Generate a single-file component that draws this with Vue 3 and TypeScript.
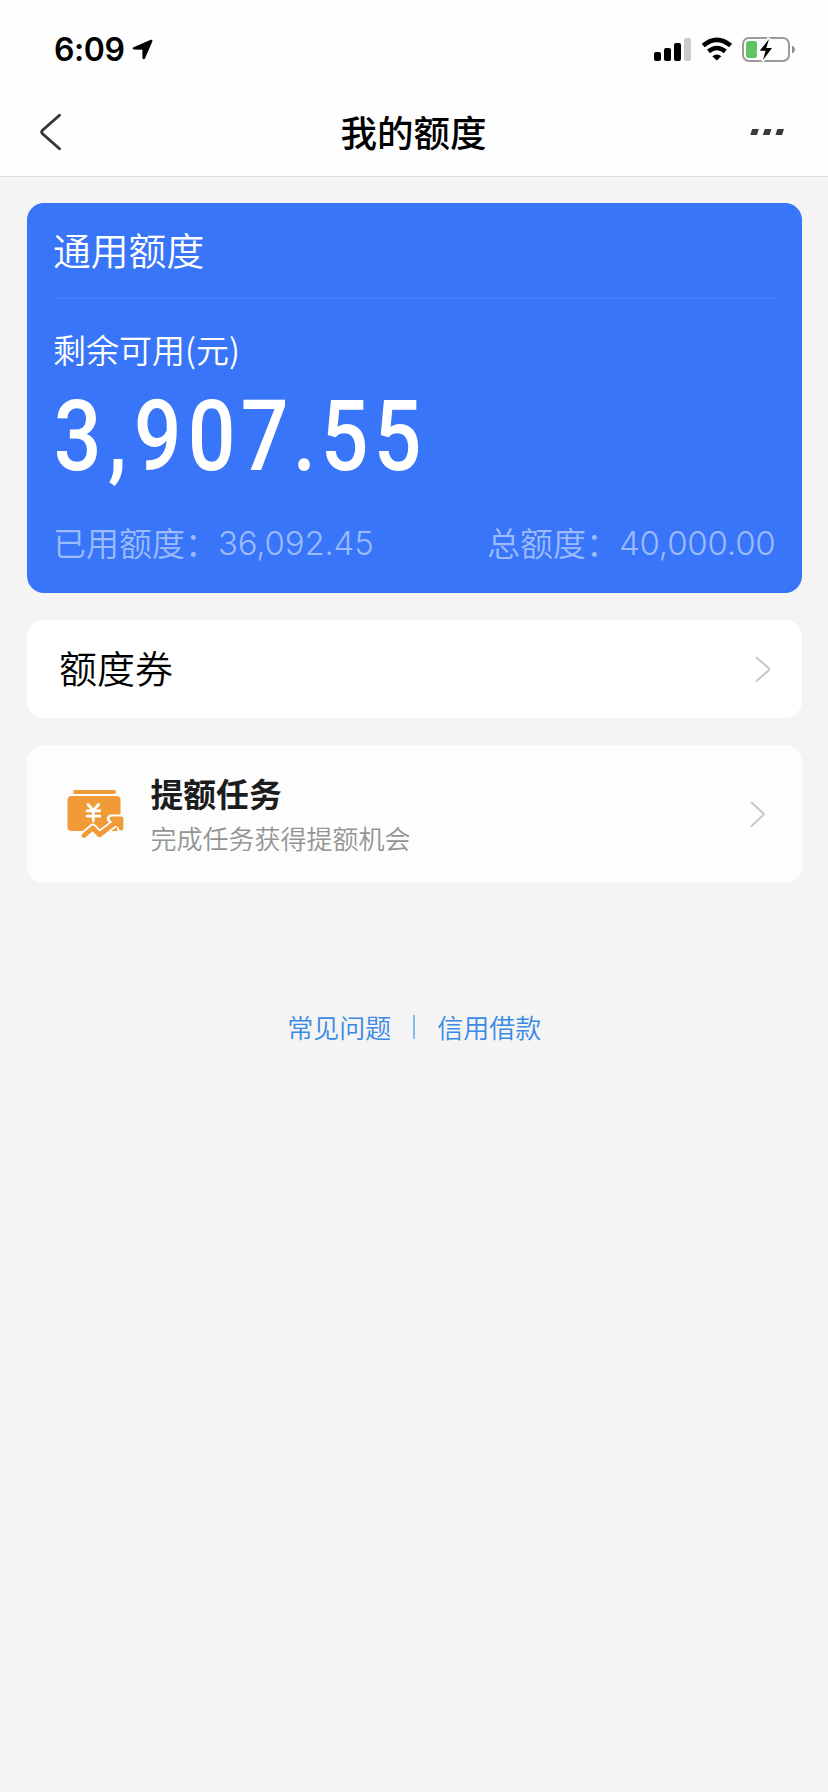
<script setup lang="ts">
import { computed, ref } from 'vue'

interface QuotaItem {
  label: string
  value: string
}

const available = ref('3,907.55')
const amountChars = computed(() =>
  available.value.split('').map((char) => ({ char, mark: char === ',' || char === '.' })),
)

const details: QuotaItem[] = [
  { label: '已用额度：', value: '36,092.45' },
  { label: '总额度：', value: '40,000.00' },
]
</script>

<template>
  <main class="screen">
    <div class="status">
      <div class="clock">
        <span class="time">6:09</span>
        <svg class="locate" width="22" height="22" viewBox="0 0 22 22">
          <path d="M1.5 8.2 18.8.8Q20.8.2 20.3 2.4L13.2 18.9Q11.7 21.4 10.4 19V10.8L1.8 10.4Q-.6 9.4 1.5 8.2Z" />
        </svg>
      </div>
      <div class="indicators">
        <svg width="37" height="24" viewBox="0 0 37 24">
          <rect x="0" y="14" width="7" height="9" rx="2" />
          <rect x="10" y="10" width="7" height="13" rx="2" />
          <rect x="20" y="5" width="7" height="18" rx="2" />
          <rect x="30" y="0" width="7" height="23" rx="2" fill="#cacaca" />
        </svg>
        <svg class="wifi" width="32" height="24" viewBox="0 0 32 24">
          <g fill="none" stroke="#000" stroke-width="4.6">
            <path d="M2.2 8.6Q15.8-3 29.6 8.6" />
            <path d="M7.5 14.4Q15.8 7.6 24.3 14.4" />
          </g>
          <path d="M15.8 23.6 11.3 19.2Q15.8 15.6 20.3 19.2Z" />
        </svg>
        <svg class="battery" width="53" height="25" viewBox="0 0 53 25">
          <rect x="1" y="1" width="46" height="23" rx="6" fill="none" stroke="#9a9a9a" stroke-width="2" />
          <rect x="4" y="4" width="11" height="17" rx="2.5" fill="#5fc466" />
          <path d="M50 8.5Q53 10 53 12.5T50 16.5Z" fill="#8c8c8c" />
          <path d="M27 1 17 14h6.2L20.3 24 30.7 10.6H24.5Z" stroke="#fff" stroke-width="3" />
          <path d="M27 2 17.8 13.7h5.8L21 23 30 10.9H24.3Z" />
        </svg>
      </div>
    </div>

    <header class="nav">
      <svg class="back" width="22" height="38" viewBox="0 0 22 38">
        <path d="M19.5 2.2 2.5 17.2Q.8 19 2.5 20.7L19.5 35.7" />
      </svg>
      <h1 class="title">我的额度</h1>
      <svg class="more" width="35" height="6" viewBox="0 0 35 6">
        <path d="M2.2 0h6.6L6.9 6H.2ZM14.8 0h6.6L19.5 6H12.8ZM27.4 0H34L32.1 6H25.4Z" />
      </svg>
    </header>

    <div class="content">
      <section class="quota">
        <h2 class="quota-title">通用额度</h2>
        <p class="quota-label">剩余可用(元)</p>
        <p class="amount">
          <span v-for="(item, i) in amountChars" :key="i" class="digit" :class="{ mark: item.mark }">{{ item.char }}</span>
        </p>
        <div class="details">
          <p v-for="item in details" :key="item.label" class="detail">
            <span class="detail-label">{{ item.label }}</span>
            <span class="detail-value">{{ item.value }}</span>
          </p>
        </div>
      </section>

      <section class="row coupon">
        <h2 class="coupon-title">额度券</h2>
        <svg class="chevron" width="16" height="26" viewBox="0 0 16 26">
          <path d="M1.5 1.5 13.5 12Q14.8 13.2 13.5 14.4L1.5 25" />
        </svg>
      </section>

      <section class="row task">
        <svg class="task-icon" width="58" height="50" viewBox="0 0 58 50">
          <rect x="6" y="1" width="43" height="4" rx="2" />
          <rect x="0.5" y="7" width="53" height="35" rx="4" />
          <path class="yen" d="M21 15.5 26.3 21.5 31.6 15.5M20 21.8H32.8M20 27.2H32.8M26.3 21.7V32" />
          <path class="trend-gap" d="M17 46.5 25.8 39 32.5 45.8 50 32.5M44 29.8H54V39" />
          <path class="trend" d="M17 46.5 25.8 39 32.5 45.8 51 31.5M45 29.8H54V39" />
          <path d="M46 28H56V41L48 36.5 44.5 32Z" />
        </svg>
        <div class="task-text">
          <h3 class="task-title">提额任务</h3>
          <p class="task-sub">完成任务获得提额机会</p>
        </div>
        <svg class="chevron" width="16" height="26" viewBox="0 0 16 26">
          <path d="M1.5 1.5 13 12Q14.2 13.2 13 14.4L1.5 25" />
        </svg>
      </section>

      <footer class="links">
        <span>常见问题</span>
        <i class="bar"></i>
        <span>信用借款</span>
      </footer>
    </div>
  </main>
</template>

<style>
body {
  background: #f4f4f4;
}
</style>

<style scoped>
.screen {
  min-height: 1792px;
  background: #f4f4f4;
  font-family: 'Noto Sans CJK SC', sans-serif;
  color: #000;
}
h1, h2, h3, p {
  margin: 0;
  font-weight: 400;
}
svg {
  display: block;
  flex: none;
}
.status {
  box-sizing: border-box;
  height: 88px;
  padding: 0 34px 0 54px;
  background: #fefefe;
  display: flex;
  justify-content: space-between;
}
.clock {
  display: flex;
  padding-top: 30px;
}
.time {
  width: 78px;
  font: 600 32px/40px Inter, sans-serif;
  letter-spacing: -0.4px;
  white-space: nowrap;
}
.locate {
  margin-top: 9px;
}
.indicators {
  display: flex;
  align-items: flex-start;
  padding-top: 37px;
  margin-right: -1px;
}
.indicators svg:first-child {
  margin-top: 1px;
}
.wifi {
  margin-left: 10px;
}
.battery {
  margin-left: 9px;
}
.nav {
  box-sizing: border-box;
  height: 89px;
  padding: 0 43px 0 40px;
  background: #fefefe;
  border-bottom: 1px solid #dcdcdc;
  display: grid;
  grid-template-columns: 37px 1fr 35px;
  align-items: center;
}
.back {
  fill: none;
  stroke: #333;
  stroke-width: 2.8;
  stroke-linecap: round;
}
.title {
  font-size: 36.5px;
  font-weight: 500;
  line-height: 48px;
  padding-bottom: 1px;
  text-align: center;
}
.more {
  fill: #3a3a3a;
}
.content {
  padding: 25.5px 26.5px 0 27px;
}
.quota {
  box-sizing: border-box;
  height: 390.5px;
  padding: 0 26px;
  border-radius: 17px;
  background: #3875f8;
  color: #fff;
}
.quota-title {
  height: 95px;
  font-size: 37.8px;
  font-weight: 350;
  line-height: 91px;
  border-bottom: 1px solid #4b83f9;
}
.quota-label {
  padding-top: 25px;
  font-size: 33px;
  font-weight: 350;
  line-height: 50px;
}
.amount {
  display: flex;
  height: 143px;
  margin-left: -2px;
  font: 500 99px/125px Roboto, sans-serif;
}
.digit {
  width: 53.3px;
  display: flex;
  justify-content: center;
  transform: scaleX(0.85);
}
.mark {
  width: 27px;
}
.details {
  display: flex;
  justify-content: space-between;
  color: #9cbbfc;
  line-height: 50px;
}
.detail {
  display: flex;
  font-size: 33px;
  font-weight: 350;
}
.detail-value {
  padding-top: 1px;
  font-family: Inter, sans-serif;
  font-size: 33px;
  font-weight: 300;
  letter-spacing: -0.2px;
}
.row {
  box-sizing: border-box;
  display: flex;
  align-items: center;
  border-radius: 17px;
}
.coupon {
  height: 98px;
  margin-top: 27px;
  padding: 0 31px 0 32px;
  justify-content: space-between;
  background: #fff;
}
.coupon-title {
  font-size: 38px;
  font-weight: 350;
  line-height: 56px;
  padding-bottom: 5px;
}
.chevron {
  fill: none;
  stroke: #c8c8c8;
  stroke-width: 2;
  stroke-linecap: round;
}
.task {
  height: 138px;
  margin-top: 27px;
  padding: 0 36px 0 40px;
  background: #fdfdfd;
}
.task-icon {
  fill: #f19a38;
}
.yen, .trend, .trend-gap {
  fill: none;
  stroke-linecap: round;
  stroke-linejoin: round;
}
.yen {
  stroke: #fff;
  stroke-width: 2.8;
}
.trend {
  stroke: #f19a38;
  stroke-width: 4.8;
}
.trend-gap {
  stroke: #fdfdfd;
  stroke-width: 8.4;
}
.task-text {
  flex: 1;
  margin-left: 25.5px;
}
.task-title {
  font-size: 32.8px;
  font-weight: 700;
  line-height: 46px;
  color: #1c1c1c;
}
.task-sub {
  font-size: 26px;
  font-weight: 350;
  line-height: 43px;
  color: #949494;
}
.links {
  display: flex;
  justify-content: center;
  align-items: center;
  margin-top: 124px;
  font-size: 26px;
  font-weight: 350;
  line-height: 40px;
  color: #3a8ae4;
}
.bar {
  width: 2px;
  height: 24px;
  margin: 0 22px;
  background: #85b8ee;
}
</style>
